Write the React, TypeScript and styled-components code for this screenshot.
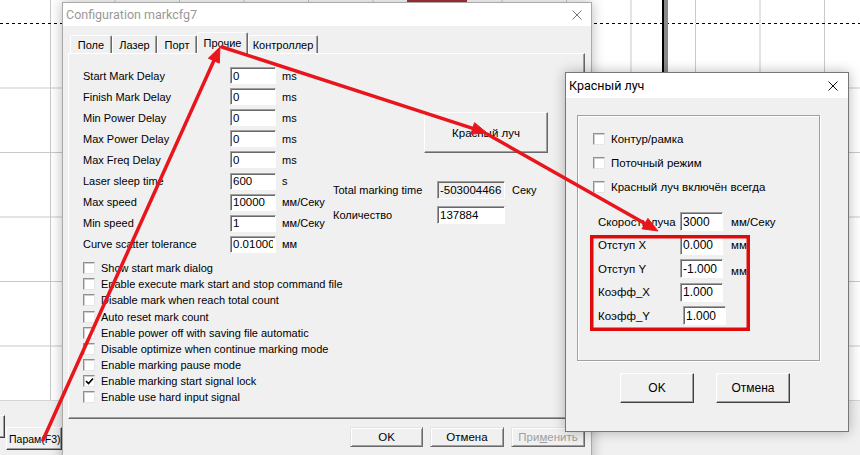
import React from "react";
import styled, { createGlobalStyle } from "styled-components";

const GlobalStyle = createGlobalStyle`
  html, body { margin: 0; padding: 0; background: #fff; }
  body { overflow: hidden; font-family: "Liberation Sans", Arial, sans-serif; color: #000; }
  * { box-sizing: border-box; }
`;

const Desktop = styled.div`
  position: relative;
  width: 860px;
  height: 455px;
  overflow: hidden;
  display: flex;
  flex-direction: column;
`;

const Canvas = styled.div`
  position: relative;
  height: 400px;
  flex: none;
  background-color: #fff;
  background-image: linear-gradient(to right, #c9c9c9 1px, transparent 1px),
    linear-gradient(to bottom, #c9c9c9 1px, transparent 1px);
  background-size: 64.5px 100%, 100% 64.5px;
  background-position: 50px 0, 0 23px;
`;

const DashLine = styled.div`
  position: absolute;
  left: 0;
  right: 0;
  top: 23px;
  height: 1px;
  background: repeating-linear-gradient(to right, #000 0 3px, #fff 3px 6px);
`;

const CursorLine = styled.div`
  position: absolute;
  left: 662px;
  top: 0;
  width: 6px;
  height: 90px;
  background: linear-gradient(to right, #000 0 2px, #8a8a8a 2px 6px);
`;

const Marker = styled.div`
  position: absolute;
  left: 407px;
  top: 0;
  width: 60px;
  height: 2px;
  background: #a8323c;
`;

const BottomBar = styled.div`
  flex: 1;
  background: #f0f0f0;
  border-top: 1px solid #d4d4d4;
  display: flex;
  align-items: flex-start;
`;

const BarButton = styled.div<{ $top: number; $w: number; $ml: number }>`
  margin-top: ${(p) => p.$top}px;
  margin-left: ${(p) => p.$ml}px;
  width: ${(p) => p.$w}px;
  height: 23px;
  flex: none;
  display: flex;
  align-items: center;
  padding-left: 2px;
  font-size: 10.5px;
  background: #f0f0f0;
  border: 1px solid;
  border-color: #fff #404040 #404040 #fff;
  box-shadow: inset -1px -1px #a0a0a0;
  white-space: nowrap;
  overflow: hidden;
`;

const Window = styled.section<{ $x: number; $y: number; $w: number; $h: number; $active?: boolean }>`
  position: absolute;
  left: ${(p) => p.$x}px;
  top: ${(p) => p.$y}px;
  width: ${(p) => p.$w}px;
  height: ${(p) => p.$h}px;
  background: #f0f0f0;
  border: 1px solid ${(p) => (p.$active ? "#777" : "#aaa")};
  box-shadow: 0 0 12px rgba(0, 0, 0, 0.28);
  display: flex;
  flex-direction: column;
`;

const TitleBar = styled.header<{ $h: number; $pr: number }>`
  height: ${(p) => p.$h}px;
  flex: none;
  background: #fff;
  display: flex;
  align-items: center;
  justify-content: space-between;
  padding: 0 ${(p) => p.$pr}px 0 3px;
`;

const Title = styled.span<{ $active?: boolean }>`
  font-family: Roboto, "Liberation Sans", sans-serif;
  font-size: 12.5px;
  color: ${(p) => (p.$active ? "#000" : "#999")};
  white-space: nowrap;
`;

const CloseIcon = ({ color }: { color: string }) => (
  <svg width="10" height="10" viewBox="0 0 10 10">
    <path d="M0.5 0.5 L9.5 9.5 M9.5 0.5 L0.5 9.5" stroke={color} strokeWidth="1" fill="none" />
  </svg>
);

const MainBody = styled.div`
  flex: 1;
  padding: 0 6px 0 5px;
  display: flex;
  flex-direction: column;
`;

const TabStrip = styled.div`
  height: 27px;
  display: flex;
  align-items: flex-end;
  padding-left: 2px;
  position: relative;
  z-index: 1;
`;

const Tab = styled.div<{ $active?: boolean; $w: number }>`
  width: ${(p) => p.$w}px;
  height: ${(p) => (p.$active ? 22 : 18)}px;
  margin-bottom: ${(p) => (p.$active ? -1 : 0)}px;
  padding-bottom: ${(p) => (p.$active ? 2 : 0)}px;
  background: #f0f0f0;
  border: 1px solid;
  border-bottom: none;
  border-color: #fff #696969 transparent #fff;
  box-shadow: inset -1px 0 #a0a0a0;
  border-radius: 2px 2px 0 0;
  display: flex;
  align-items: center;
  justify-content: center;
  font-size: 11px;
  white-space: nowrap;
`;

const TabPanel = styled.div`
  height: 366px;
  flex: none;
  border: 1px solid;
  border-color: #fff #696969 #696969 #fff;
  box-shadow: inset -1px -1px #a0a0a0;
  padding: 11px 0 0 14px;
  display: flex;
  flex-direction: column;
`;

const TopSection = styled.div`
  display: flex;
`;

const ParamGrid = styled.div`
  display: grid;
  grid-template-columns: 147px 46px 57px;
  grid-auto-rows: 21.1px;
  align-items: center;
`;

const FieldLabel = styled.span<{ $size?: number }>`
  font-size: ${(p) => p.$size ?? 11}px;
  white-space: nowrap;
`;

const TextBox = styled.input<{ $h?: number; $size?: number; $grey?: boolean; $nudge?: number }>`
  width: 100%;
  height: ${(p) => p.$h ?? 17}px;
  margin: 0 0 0 ${(p) => p.$nudge ?? 0}px;
  padding: 0 2px;
  font-family: "Liberation Sans", Arial, sans-serif;
  font-size: ${(p) => p.$size ?? 11.5}px;
  color: #000;
  background: ${(p) => (p.$grey ? "#f0f0f0" : "#fff")};
  border: 1px solid;
  border-color: #a0a0a0 #fff #fff #a0a0a0;
  box-shadow: inset 1px 1px #696969;
  outline: none;
`;

const Unit = styled.span<{ $pl: number; $size?: number; $dy?: number }>`
  padding-left: ${(p) => p.$pl}px;
  font-size: ${(p) => p.$size ?? 11}px;
  white-space: nowrap;
  position: relative;
  top: ${(p) => p.$dy ?? 0}px;
`;

const SideColumn = styled.div`
  padding-top: 47px;
  display: flex;
  flex-direction: column;
  align-items: flex-start;
`;

const RaisedButton = styled.div`
  margin-left: 91px;
  width: 124px;
  height: 41px;
  display: flex;
  align-items: center;
  justify-content: center;
  font-size: 11.5px;
  background: #f0f0f0;
  border: 1px solid;
  border-color: #fff #696969 #696969 #fff;
  box-shadow: inset -1px -1px #a0a0a0;
`;

const StatGrid = styled.div`
  margin-top: 24px;
  display: grid;
  grid-template-columns: 104px 68px auto;
  grid-auto-rows: 25px;
  align-items: center;
`;

const CheckList = styled.div<{ $row: number; $mt: number }>`
  margin-top: ${(p) => p.$mt}px;
  display: grid;
  grid-auto-rows: ${(p) => p.$row}px;
`;

const CheckRow = styled.label<{ $size: number }>`
  display: flex;
  align-items: center;
  gap: 6px;
  font-size: ${(p) => p.$size}px;
  white-space: nowrap;
`;

const Box = styled.span`
  width: 12px;
  height: 12px;
  flex: none;
  display: flex;
  align-items: center;
  justify-content: center;
  background: #fff;
  border: 1px solid;
  border-color: #8f8f8f #e6e6e6 #e6e6e6 #8f8f8f;
  box-shadow: inset 1px 1px #cfcfcf;
`;

const Check = ({ on, label, size }: { on?: boolean; label: string; size: number }) => (
  <CheckRow $size={size}>
    <Box>
      {on && (
        <svg width="9" height="8" viewBox="0 0 9 8">
          <polyline points="1,4 3.5,6.5 8,1.5" stroke="#000" strokeWidth="1.7" fill="none" />
        </svg>
      )}
    </Box>
    {label}
  </CheckRow>
);

const Footer = styled.div`
  display: flex;
  justify-content: flex-end;
  gap: 7px;
  padding-top: 8px;
`;

const PushButton = styled.div<{ $w: number; $disabled?: boolean }>`
  width: ${(p) => p.$w}px;
  height: 20px;
  display: flex;
  align-items: center;
  justify-content: center;
  font-size: 11.5px;
  color: ${(p) => (p.$disabled ? "#a0a0a0" : "#000")};
  background: #f0f0f0;
  border: 1px solid;
  border-color: #e3e3e3 #696969 #696969 #e3e3e3;
  box-shadow: inset 1px 1px #fff, inset -1px -1px #a0a0a0;
  u { text-decoration: underline; }
`;

const BeamBody = styled.div`
  flex: 1;
  padding: 17px 0 0 11px;
  display: flex;
  flex-direction: column;
`;

const GroupBox = styled.div`
  width: 243px;
  height: 246px;
  flex: none;
  border: 1px solid #a0a0a0;
  box-shadow: inset 1px 1px #fff, 1px 1px #fff;
  padding: 11px 0 0 15px;
`;

const BeamGrid = styled.div`
  margin-top: 11px;
  margin-left: 5px;
  display: grid;
  grid-template-columns: 82px 43px 56px;
  grid-auto-rows: 23.5px;
  align-items: center;
`;

const BeamFooter = styled.div`
  display: flex;
  gap: 22px;
  padding: 12px 0 0 43px;
`;

const ClassicButton = styled.div`
  width: 74px;
  height: 30px;
  display: flex;
  align-items: center;
  justify-content: center;
  font-size: 12px;
  background: #f0f0f0;
  border: 1px solid;
  border-color: #fff #404040 #404040 #fff;
  box-shadow: inset -1px -1px #a0a0a0;
`;

const Overlay = styled.svg`
  position: absolute;
  left: 0;
  top: 0;
  z-index: 10;
  pointer-events: none;
`;

const tabs = [
  { name: "Поле", w: 42 },
  { name: "Лазер", w: 45 },
  { name: "Порт", w: 40 },
  { name: "Прочие", w: 51, active: true },
  { name: "Контроллер", w: 70 },
];

const params = [
  { label: "Start Mark Delay", value: "0", unit: "ms" },
  { label: "Finish Mark Delay", value: "0", unit: "ms" },
  { label: "Min Power Delay", value: "0", unit: "ms" },
  { label: "Max Power Delay", value: "0", unit: "ms" },
  { label: "Max Freq Delay", value: "0", unit: "ms" },
  { label: "Laser sleep time", value: "600", unit: "s" },
  { label: "Max speed", value: "10000", unit: "мм/Секу" },
  { label: "Min speed", value: "1", unit: "мм/Секу" },
  { label: "Curve scatter tolerance", value: "0.010000", unit: "мм" },
];

const options = [
  { label: "Show start mark dialog" },
  { label: "Enable execute mark start and stop command file" },
  { label: "Disable mark when reach total count" },
  { label: "Auto reset mark count" },
  { label: "Enable power off with saving file automatic" },
  { label: "Disable optimize when continue marking mode" },
  { label: "Enable marking pause mode" },
  { label: "Enable marking start signal lock", on: true },
  { label: "Enable use hard input signal" },
];

const beamFields = [
  { label: "Скорость луча", value: "3000", unit: "мм/Секу" },
  { label: "Отступ X", value: "0.000", unit: "мм" },
  { label: "Отступ Y", value: "-1.000", unit: "мм", dy: 2 },
  { label: "Коэфф_X", value: "1.000", unit: "" },
  { label: "Коэфф_Y", value: "1.000", unit: "", nudge: 3 },
];

const arrows = [
  [43, 440, 220, 47],
  [222, 47, 487, 133],
  [487, 134, 658, 231],
];

const arrowHead = (x1: number, y1: number, x2: number, y2: number, len = 15, half = 6) => {
  const a = Math.atan2(y2 - y1, x2 - x1);
  const bx = x2 - len * Math.cos(a);
  const by = y2 - len * Math.sin(a);
  const px = -Math.sin(a) * half;
  const py = Math.cos(a) * half;
  return { bx, by, points: `${x2},${y2} ${bx + px},${by + py} ${bx - px},${by - py}` };
};

const Annotations = () => (
  <Overlay width="860" height="455" viewBox="0 0 860 455">
    <rect x="591.75" y="236.75" width="156.5" height="92.5" fill="none" stroke="#e10a0a" strokeWidth="3.5" />
    {arrows.map(([x1, y1, x2, y2], i) => {
      const h = arrowHead(x1, y1, x2, y2);
      return (
        <g key={i} fill="#e8161c" stroke="#e8161c">
          <line x1={x1} y1={y1} x2={h.bx} y2={h.by} strokeWidth="3.5" strokeLinecap="round" />
          <polygon points={h.points} strokeWidth="1" />
        </g>
      );
    })}
  </Overlay>
);

export default function App() {
  return (
    <Desktop>
      <GlobalStyle />
      <Canvas>
        <DashLine />
        <CursorLine />
        <Marker />
      </Canvas>
      <BottomBar>
        <BarButton $top={14} $ml={-60} $w={65} />
        <BarButton $top={26} $ml={1} $w={56}>
          Парам(F3)
        </BarButton>
      </BottomBar>

      <Window $x={62} $y={2} $w={530} $h={470}>
        <TitleBar $h={23} $pr={9}>
          <Title>Configuration markcfg7</Title>
          <CloseIcon color="#777" />
        </TitleBar>
        <MainBody>
          <TabStrip>
            {tabs.map((t) => (
              <Tab key={t.name} $w={t.w} $active={t.active}>
                {t.name}
              </Tab>
            ))}
          </TabStrip>
          <TabPanel>
            <TopSection>
              <ParamGrid>
                {params.map((p) => (
                  <React.Fragment key={p.label}>
                    <FieldLabel>{p.label}</FieldLabel>
                    <TextBox defaultValue={p.value} />
                    <Unit $pl={6}>{p.unit}</Unit>
                  </React.Fragment>
                ))}
              </ParamGrid>
              <SideColumn>
                <RaisedButton>Красный луч</RaisedButton>
                <StatGrid>
                  <FieldLabel>Total marking time</FieldLabel>
                  <TextBox $h={18} $grey defaultValue="-503004466" readOnly />
                  <Unit $pl={7}>Секу</Unit>
                  <FieldLabel>Количество</FieldLabel>
                  <TextBox $h={18} defaultValue="137884" />
                  <span />
                </StatGrid>
              </SideColumn>
            </TopSection>
            <CheckList $row={16.2} $mt={5}>
              {options.map((o) => (
                <Check key={o.label} label={o.label} on={o.on} size={11} />
              ))}
            </CheckList>
          </TabPanel>
          <Footer>
            <PushButton $w={73}>OK</PushButton>
            <PushButton $w={74}>Отмена</PushButton>
            <PushButton $w={74} $disabled>
              При<u>м</u>енить
            </PushButton>
          </Footer>
        </MainBody>
      </Window>

      <Window $x={565} $y={72} $w={284} $h={360} $active>
        <TitleBar $h={25} $pr={10}>
          <Title $active>Красный луч</Title>
          <CloseIcon color="#111" />
        </TitleBar>
        <BeamBody>
          <GroupBox>
            <CheckList $row={24} $mt={0}>
              <Check label="Контур/рамка" size={11.5} />
              <Check label="Поточный режим" size={11.5} />
              <Check label="Красный луч включён всегда" size={11.5} />
            </CheckList>
            <BeamGrid>
              {beamFields.map((f) => (
                <React.Fragment key={f.label}>
                  <FieldLabel $size={11.5}>{f.label}</FieldLabel>
                  <TextBox $h={19} $size={12} $nudge={f.nudge} defaultValue={f.value} />
                  <Unit $pl={8} $size={11.5} $dy={f.dy}>
                    {f.unit}
                  </Unit>
                </React.Fragment>
              ))}
            </BeamGrid>
          </GroupBox>
          <BeamFooter>
            <ClassicButton>OK</ClassicButton>
            <ClassicButton>Отмена</ClassicButton>
          </BeamFooter>
        </BeamBody>
      </Window>

      <Annotations />
    </Desktop>
  );
}
